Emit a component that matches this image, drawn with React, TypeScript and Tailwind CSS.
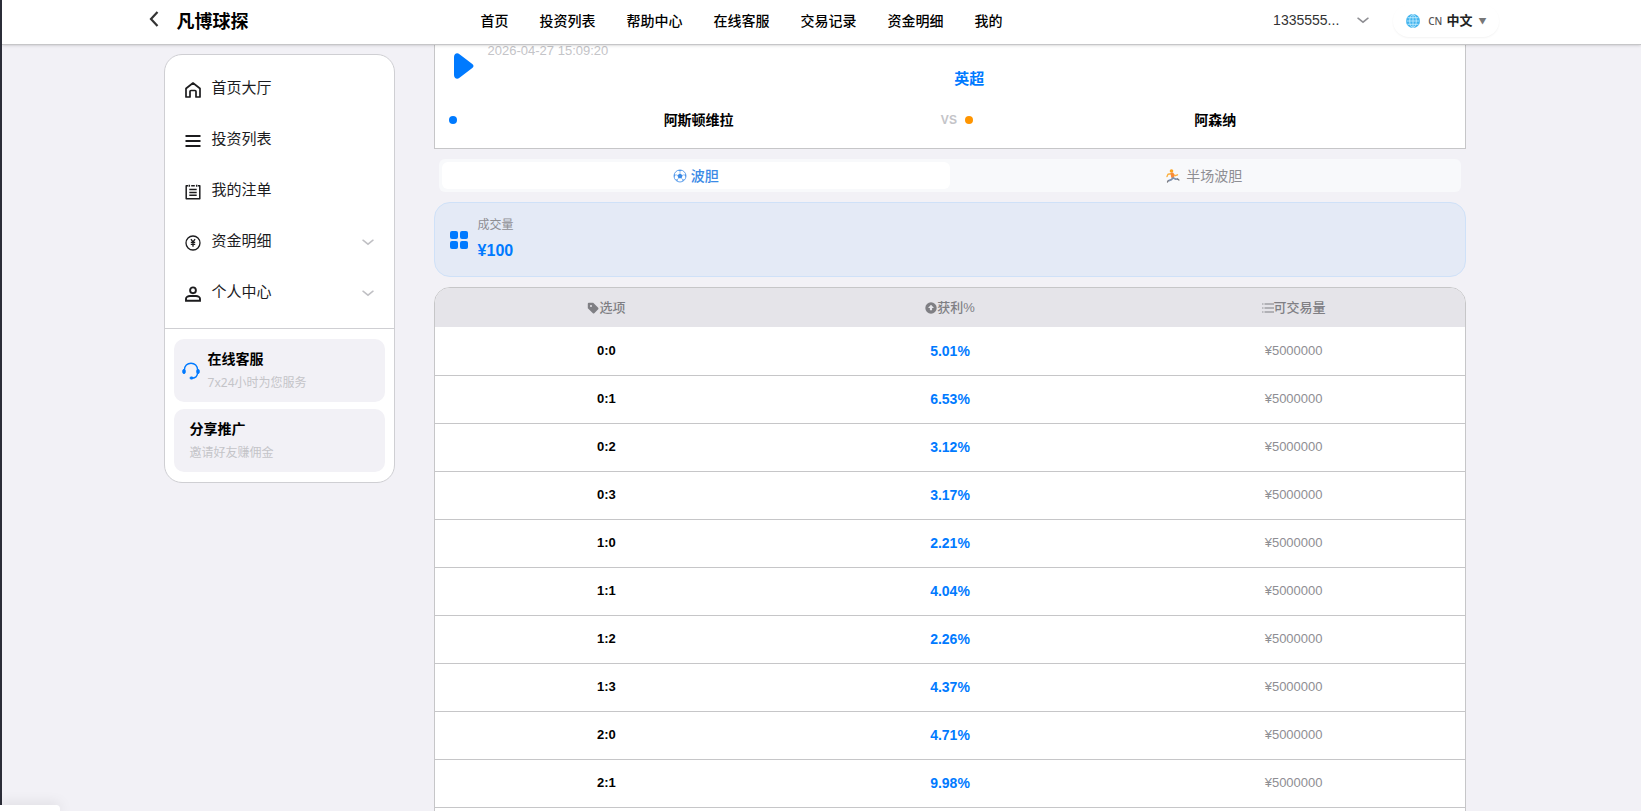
import type { ReactNode } from 'react'

const navLinks = ['首页', '投资列表', '帮助中心', '在线客服', '交易记录', '资金明细', '我的']

const odds = [
  { score: '0:0', profit: '5.01%' },
  { score: '0:1', profit: '6.53%' },
  { score: '0:2', profit: '3.12%' },
  { score: '0:3', profit: '3.17%' },
  { score: '1:0', profit: '2.21%' },
  { score: '1:1', profit: '4.04%' },
  { score: '1:2', profit: '2.26%' },
  { score: '1:3', profit: '4.37%' },
  { score: '2:0', profit: '4.71%' },
  { score: '2:1', profit: '9.98%' },
]

const arialCls = "font-['Liberation_Sans','Noto_Sans_CJK_SC',sans-serif]"

function Chevron({ className }: { className: string }) {
  return (
    <svg viewBox="0 0 12 7" className={className} fill="none" stroke="currentColor" strokeWidth="1.5" strokeLinecap="round">
      <path d="M1 1.2 6 5.2 11 1.2" />
    </svg>
  )
}

function HomeIcon() {
  return (
    <svg viewBox="0 0 16 16" className="size-4" fill="none" stroke="currentColor" strokeWidth="1.7" strokeLinejoin="round">
      <path d="M1 6.5 8 1l7 5.5V15h-4V9.5a1 1 0 0 0-1-1H6a1 1 0 0 0-1 1V15H1z" />
    </svg>
  )
}

function BarsIcon() {
  return (
    <svg viewBox="0 0 16 16" className="size-4" stroke="currentColor" strokeWidth="1.8">
      <path d="M.5 3h15M.5 8h15M.5 13h15" />
    </svg>
  )
}

function OrdersIcon() {
  return (
    <svg viewBox="0 0 16 16" className="size-4" fill="none" stroke="currentColor" strokeWidth="1.5" strokeLinejoin="round">
      <path d="M3 1.8H1.2v13h13.600v-13H13M6.2 1.8h3.6M4.300.8v2M11.700.8v2M4.3 5.6h7.4M4.3 8.4h7.4M4.3 11.2h7.4" />
    </svg>
  )
}

function YuanIcon() {
  return (
    <svg viewBox="0 0 16 16" className="size-4" fill="none" stroke="currentColor">
      <circle cx="8" cy="8" r="7" strokeWidth="1.3" />
      <path d="M5.9 4.2 8 7l2.1-2.8M8 7v4.8M5.8 7.3h4.400M5.8 9.3h4.400" strokeWidth="1.3" />
    </svg>
  )
}

function UserIcon() {
  return (
    <svg viewBox="0 0 16 16" className="size-4" fill="none" stroke="currentColor" strokeWidth="1.9">
      <circle cx="8" cy="4.3" r="2.9" />
      <path d="M1 14.7v-1.9c0-1.6 2-2.8 4-2.8h6c2 0 4 1.2 4 2.8v1.9z" />
    </svg>
  )
}

function HeadsetIcon() {
  return (
    <svg viewBox="0 0 18 18" className="size-[18px] text-[#007aff]" fill="none" stroke="currentColor">
      <path d="M2.4 8C2.4 3.9 5.3 1.2 9 1.2S15.6 3.9 15.6 8" strokeWidth="1.4" />
      <path d="M15.5 11c0 3-2 5-5.5 5.2" strokeWidth="1.4" />
      <rect x=".8" y="7.5" width="2.4" height="4" rx="1" fill="currentColor" />
      <rect x="14.8" y="7.5" width="2.4" height="4" rx="1" fill="currentColor" />
      <rect x="8" y="15" width="3" height="2" rx="1" fill="currentColor" />
    </svg>
  )
}

function BallIcon() {
  return (
    <svg viewBox="0 0 14 14" className="size-[14px]" fill="none" stroke="currentColor">
      <circle cx="7" cy="7" r="6" strokeWidth=".8" />
      <path d="m7 4.4 2.6 1.9-1 3H5.4l-1-3z" fill="currentColor" stroke="none" />
      <path d="M7 4.5v-2M9.5 6.3l2-.8M8.6 9.2l1.3 1.9M5.4 9.2l-1.3 1.9M4.5 6.3l-2-.8" strokeWidth=".5" />
      <path d="m5 1.2 2 1.4 2-1.4zM12.9 5.2l-1.5.8 1.2 2.2zM1.1 5.2l1.5.8-1.2 2.2zM9.3 12.3l.3-1.7 1.9-.2zM4.700 12.3l-.3-1.7-1.9-.2z" fill="currentColor" stroke="none" />
    </svg>
  )
}

function RunnerIcon() {
  return (
    <svg viewBox="0 0 14 14" className="size-[14px]" fill="none" strokeLinecap="round" strokeLinejoin="round">
      <circle cx="5.5" cy="2" r="1.8" fill="#fba41f" />
      <path d="M5 4.8 2 5.3 1 7.5M7 5l2.2 1.700 2.300-.900" stroke="#fbb040" strokeWidth="1.4" />
      <path d="m6.200 5 .5 2.600" stroke="#f98a3a" strokeWidth="3.2" />
      <path d="m6.8 9.200-1.400 1.400-2.600 1M7.4 9l2.4 1.200 1.600-.200" stroke="#8093b0" strokeWidth="1.7" />
      <path d="m2.200 11.600-.700 1.500M11.600 10l1.300 1" stroke="#77777c" strokeWidth="1.3" />
    </svg>
  )
}

function TagIcon() {
  return (
    <svg viewBox="0 0 12 12" className="size-3" fill="currentColor" fillRule="evenodd">
      <path d="M.8 1.8a1 1 0 0 1 1-1h4.4l5 5a1 1 0 0 1 0 1.400l-3.9 4a1 1 0 0 1-1.4 0l-5.1-5zM4 3a1 1 0 1 0 0 2 1 1 0 0 0 0-2z" />
    </svg>
  )
}

function ProfitIcon() {
  return (
    <svg viewBox="0 0 12 12" className="size-3">
      <circle cx="6" cy="6" r="5.7" fill="currentColor" />
      <path d="m6 2.800 3 3.100H7.100v2.400H4.900V5.900H3z" fill="#e5e5ea" />
    </svg>
  )
}

function ListIcon() {
  return (
    <svg viewBox="0 0 12 12" className="size-3" stroke="currentColor" strokeWidth="1.2">
      <path d="M2.500 2H12M2.500 6H12M2.500 10H12M.2 2h1.200M.2 6h1.200M.2 10h1.200" />
    </svg>
  )
}

function GlobeIcon() {
  return (
    <svg viewBox="0 0 14 14" className="size-[14px]" fill="none" stroke="#c9efff" strokeWidth=".8">
      <circle cx="7" cy="7" r="7" fill="#42b4ee" stroke="none" />
      <path d="M7 .5v13M.5 7h13M1.5 3.7h11M1.5 10.3h11" />
      <ellipse cx="7" cy="7" rx="3.3" ry="6.5" />
    </svg>
  )
}

interface SideItemProps {
  icon: ReactNode
  label: string
  expandable?: boolean
}

function SideItem({ icon, label, expandable }: SideItemProps) {
  return (
    <a href="#" className="flex h-[51px] items-center px-5 text-[#1c1c1e]">
      <span className="mt-1">{icon}</span>
      <span className="ml-[11px] flex-1 text-[15px]">{label}</span>
      {expandable && <Chevron className="mt-1 h-[7px] w-3 text-[#c0c0c4]" />}
    </a>
  )
}

function Th({ icon, label }: { icon: ReactNode; label: string }) {
  return (
    <th scope="col" className="w-1/3 p-0 font-medium">
      <span className="flex items-center justify-center">
        {icon}
        {label}
      </span>
    </th>
  )
}

export default function App() {
  return (
    <div className="h-screen overflow-hidden border-l-2 border-[#2b2d38] bg-[#f2f1f6] font-['Noto_Sans','Noto_Sans_CJK_SC',sans-serif] text-black">
      <header className="relative z-10 h-[45px] border-b border-[#c6c6c8] bg-white shadow-sm">
        <div className="mx-auto flex h-full w-5/6 items-center pb-[2px]">
          <button type="button" aria-label="返回" className="mb-1 ml-[10px]">
            <svg viewBox="0 0 10 16" className="h-4 w-[10px]" fill="none" stroke="#333" strokeWidth="2.2">
              <path d="M8.5 1 2 8l6.5 7" />
            </svg>
          </button>
          <h1 className="ml-[18px] text-lg font-bold">凡博球探</h1>
          <nav className="ml-[232px] flex gap-[31px] text-sm font-medium">
            {navLinks.map(l => (
              <a key={l} href="#">{l}</a>
            ))}
          </nav>
          <button type="button" className="mb-[2px] ml-auto flex items-center text-[#333]">
            <span className={`text-sm ${arialCls}`}>1335555...</span>
            <Chevron className="ml-[18px] h-[7px] w-3 text-[#8e8e93]" />
          </button>
          <button type="button" className="mr-[5px] ml-6 flex h-8 items-center rounded-2xl px-[13px] text-[13px] shadow-xs">
            <GlobeIcon />
            <span className="ml-2 text-[10px] font-medium text-[#555]">CN</span>
            <span className="ml-1 font-bold text-[#222]">中文</span>
            <span className="ml-[6px] text-[8px] text-[#777]">▼</span>
          </button>
        </div>
      </header>

      <div className="mx-auto flex w-5/6 items-start">
        <aside className="mt-[9px] ml-[25px] w-[231px] shrink-0 rounded-[18px] border border-[#cfcfd3] bg-white">
          <nav className="pt-[7px] pb-[11px]">
            <SideItem icon={<HomeIcon />} label="首页大厅" />
            <SideItem icon={<BarsIcon />} label="投资列表" />
            <SideItem icon={<OrdersIcon />} label="我的注单" />
            <SideItem icon={<YuanIcon />} label="资金明细" expandable />
            <SideItem icon={<UserIcon />} label="个人中心" expandable />
          </nav>
          <div className="space-y-[7px] border-t border-[#cfcfd3] px-[9px] py-[10px]">
            <a href="#" className="flex h-[63px] items-center gap-2 rounded-[10px] bg-[#f2f1f6] px-2">
              <HeadsetIcon />
              <span>
                <strong className="block text-sm leading-6">在线客服</strong>
                <small className="block text-xs leading-6 text-[#c4c4c8]">7x24小时为您服务</small>
              </span>
            </a>
            <a href="#" className="flex h-[63px] items-center rounded-[10px] bg-[#f2f1f6] px-4">
              <span>
                <strong className="block text-sm leading-6">分享推广</strong>
                <small className="block text-xs leading-6 text-[#c4c4c8]">邀请好友赚佣金</small>
              </span>
            </a>
          </div>
        </aside>

        <main className={`mr-[38px] ml-[39px] flex-1 ${arialCls}`}>
          <section className="h-[104px] border border-t-0 border-[#c6c6c8] bg-white pr-2 pl-[14px]">
            <div className="flex h-11 text-[#007aff]">
              <svg viewBox="0 0 20 26" className="mt-2 ml-[5px] h-[26px] w-5" fill="currentColor">
                <path d="M0 4C0 .8 3-.8 5.5 1.2L18.3 11c1.6 1.200 1.6 2.8 0 4L5.500 24.8C3 26.8 0 25.2 0 22z" />
              </svg>
              <time className="ml-[14px] text-[13px] leading-3 text-[#c4c4c8]">2026-04-27 15:09:20</time>
              <h2 className="mt-[22px] ml-[346px] text-[15px] leading-6 font-bold">英超</h2>
            </div>
            <div className="mt-[19px] flex items-center text-sm leading-6 font-bold">
              <span className="size-2 rounded-full bg-[#007aff]" />
              <span className="flex-1 text-center">阿斯顿维拉</span>
              <span className="mr-2 text-xs tracking-wide text-[#c4c4c8]">VS</span>
              <span className="size-2 rounded-full bg-[#ff9500]" />
              <span className="flex-1 text-center">阿森纳</span>
            </div>
          </section>

          <div role="tablist" className="mx-[5px] mt-[10px] grid h-[33px] grid-cols-2 rounded-md bg-[#f8f9fb] p-[3px] text-sm">
            <button type="button" role="tab" aria-selected="true" className="flex items-center justify-center gap-1 rounded-md bg-white font-medium text-[#3b8ae6]">
              <BallIcon />
              波胆
            </button>
            <button type="button" role="tab" aria-selected="false" className="flex items-center justify-center gap-[6px] rounded-md text-[#8e8e93]">
              <RunnerIcon />
              半场波胆
            </button>
          </div>

          <section className="mt-[10px] flex h-[75px] items-center rounded-2xl border border-[#cfe1f8] bg-[#e4eaf6] px-[15px]">
            <svg viewBox="0 0 18 18" className="size-[18px] text-[#007aff]" fill="currentColor">
              <rect width="8" height="8" rx="2" />
              <rect x="10" width="8" height="8" rx="2" />
              <rect y="10" width="8" height="8" rx="2" />
              <rect x="10" y="10" width="8" height="8" rx="2" />
            </svg>
            <dl className="ml-[10px] pb-1">
              <dt className="text-xs leading-[26px] text-[#8e8e93]">成交量</dt>
              <dd className="text-base leading-[26px] font-bold text-[#007aff]">¥100</dd>
            </dl>
          </section>

          <div className="mt-[10px] overflow-hidden rounded-t-2xl border border-[#c6c6c8] bg-white pb-12">
            <table className="w-full table-fixed border-collapse text-center text-[13px]">
              <thead>
                <tr className="h-[39px] bg-[#e5e4e9] text-[#7f7f84]">
                  <Th icon={<TagIcon />} label="选项" />
                  <Th icon={<ProfitIcon />} label="获利%" />
                  <Th icon={<ListIcon />} label="可交易量" />
                </tr>
              </thead>
              <tbody>
                {odds.map(o => (
                  <tr key={o.score} className="h-12 border-b border-[#c6c6c8]">
                    <td className="font-bold">{o.score}</td>
                    <td className="text-sm font-bold text-[#007aff]">{o.profit}</td>
                    <td className="text-[#8e8e93]">¥5000000</td>
                  </tr>
                ))}
              </tbody>
            </table>
          </div>
        </main>
      </div>

      <div className="fixed bottom-0 left-0 h-[6px] w-[60px] rounded-tr-sm bg-white shadow-[0_0_14px_rgba(0,0,0,0.15)]" />
    </div>
  )
}
